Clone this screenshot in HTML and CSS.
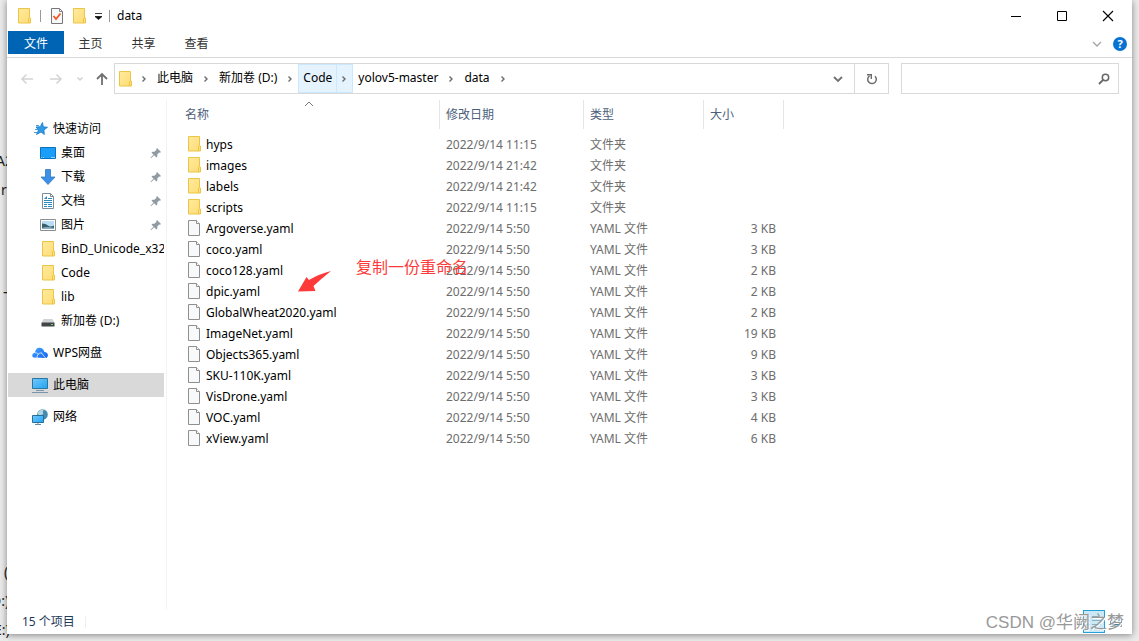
FILE: index.html
```html
<!DOCTYPE html>
<html lang="zh-CN">
<head>
<meta charset="utf-8">
<title>data</title>
<link rel="stylesheet" href="styles.css">
</head>
<body>
<svg class="sprite" aria-hidden="true">
  <defs>
    <linearGradient id="gold" x1="0" y1="0" x2="1" y2="1"><stop offset="0" stop-color="#ffea9e"/><stop offset="1" stop-color="#ffdc74"/></linearGradient>
    <linearGradient id="sky" x1="0" y1="0" x2="1" y2="1"><stop offset="0" stop-color="#72c8fb"/><stop offset="1" stop-color="#21a3f4"/></linearGradient>
    <linearGradient id="wps" x1="0" y1="0" x2="1" y2="1"><stop offset="0" stop-color="#46a5ff"/><stop offset="1" stop-color="#1263ee"/></linearGradient>
  </defs>
  <symbol id="folder" viewBox="0 0 16 16"><path d="M.5.5h11v9.500h1v5H.5z" fill="url(#gold)" stroke="#ebc546"/><path d="M10.500 15v-4.500l1-1" fill="none" stroke="#ebc546"/></symbol>
  <symbol id="file" viewBox="0 0 16 16"><path d="M.5.5h8l3 3v12H.5z" fill="#f8f9fa" stroke="#8f8f8f"/><path d="M8.500.5v3h3" fill="#fff" stroke="#8f8f8f"/></symbol>
  <symbol id="pin" viewBox="0 0 12 12"><path d="M7 1l4 4-1 .8-.8-.2-2 2 .2 2-1 .9-2.200-2.200L1 11.300l-.5-.5L3.500 7.700 1.500 5.600l1-.9 2 .1 2-2L6.300 1.900z" fill="#8f9aa3"/></symbol>
  <symbol id="right" viewBox="0 0 8 8"><path d="M2.500 1.500L5 4 2.500 6.500" fill="none" stroke="#6b6b6b" stroke-width="1.400"/></symbol>
</svg>

<div class="backdrop" aria-hidden="true">
  <span class="bit bit-a">A2</span><span class="bit bit-b">r</span><span class="bit bit-c">—</span>
  <span class="bit bit-d">(</span><span class="bit bit-e">D:)</span><span class="bit bit-f">E:)</span>
</div>

<div class="window">
  <header class="titlebar">
    <div class="quick">
      <svg class="icon"><use href="#folder"/></svg>
      <span class="bar"></span>
      <button class="plain" aria-label="属性"><svg class="icon" viewBox="0 0 16 16"><path d="M.5.5h8l3 3v12H.5z" fill="#f7f8f9" stroke="#777"/><path d="M8.500.5v3h3" fill="none" stroke="#888"/><path d="M2.500 8l2.500 3L9.500 5.500" fill="none" stroke="#f05a22" stroke-width="1.800"/></svg></button>
      <button class="plain" aria-label="新建文件夹"><svg class="icon"><use href="#folder"/></svg></button>
      <button class="plain" aria-label="自定义"><svg class="tiny" viewBox="0 0 8 8"><path d="M0 1.500h7M0 4.500h7L3.500 7.500z" fill="#111" stroke="#111" stroke-width=".8"/></svg></button>
      <span class="bar"></span>
    </div>
    <h1 class="title">data</h1>
    <div class="controls">
      <button class="control" aria-label="最小化"><svg viewBox="0 0 12 12"><path d="M1 6.500h10" stroke="#000"/></svg></button>
      <button class="control" aria-label="最大化"><svg viewBox="0 0 12 12"><path d="M1.500 1.500h9v9h-9z" fill="none" stroke="#000"/></svg></button>
      <button class="control" aria-label="关闭"><svg viewBox="0 0 12 12"><path d="M1 1l10 10M11 1L1 11" stroke="#000" stroke-width="1.100"/></svg></button>
    </div>
  </header>

  <nav class="ribbon">
    <button class="tab active">文件</button><button class="tab">主页</button><button class="tab">共享</button><button class="tab">查看</button>
    <div class="help">
      <button class="plain" aria-label="展开功能区"><svg class="small" viewBox="0 0 10 10"><path d="M1 3l4 4 4-4" fill="none" stroke="#a5a5a5" stroke-width="1.300"/></svg></button>
      <button class="question" aria-label="帮助">?</button>
    </div>
  </nav>

  <div class="navigation">
    <div class="arrows">
      <button class="plain" aria-label="后退"><svg class="arrow" viewBox="0 0 14 14"><path d="M13 7H2M6.500 2.500L2 7l4.500 4.500" fill="none" stroke="#d4d4d4" stroke-width="1.500"/></svg></button>
      <button class="plain" aria-label="前进"><svg class="arrow" viewBox="0 0 14 14"><path d="M1 7h11M7.500 2.500L12 7l-4.500 4.500" fill="none" stroke="#d4d4d4" stroke-width="1.500"/></svg></button>
      <button class="plain" aria-label="最近"><svg class="tiny" viewBox="0 0 8 8"><path d="M1.500 2.500L4 5l2.500-2.500" fill="none" stroke="#d0d0d0" stroke-width="1.500"/></svg></button>
      <button class="plain" aria-label="向上"><svg class="arrow" viewBox="0 0 14 14"><path d="M7 13V2M2 7l5-5 5 5" fill="none" stroke="#707070" stroke-width="1.800"/></svg></button>
    </div>
    <div class="address">
      <svg class="icon"><use href="#folder"/></svg>
      <svg class="tiny chevron"><use href="#right"/></svg>
      <button class="crumb">此电脑</button><svg class="tiny chevron"><use href="#right"/></svg>
      <button class="crumb">新加卷 (D:)</button><svg class="tiny chevron"><use href="#right"/></svg>
      <span class="hot"><button class="crumb">Code</button><button class="next" aria-label="Code 的子文件夹"><svg class="tiny"><use href="#right"/></svg></button></span>
      <button class="crumb">yolov5-master</button><svg class="tiny chevron"><use href="#right"/></svg>
      <button class="crumb">data</button><svg class="tiny chevron"><use href="#right"/></svg>
      <button class="history" aria-label="以前的位置"><svg class="small" viewBox="0 0 10 10"><path d="M1 3l4 4 4-4" fill="none" stroke="#707070" stroke-width="1.800"/></svg></button>
      <button class="refresh" aria-label="刷新"><svg class="reload" viewBox="0 0 12 12"><path d="M9 3.200a4.300 4.300 0 1 1-5.500-.4" fill="none" stroke="#6d6d6d" stroke-width="1.500"/><path d="M1 1.700h4.300V6" fill="none" stroke="#6d6d6d" stroke-width="1.400"/></svg></button>
    </div>
    <div class="search">
      <input class="query" type="search" aria-label="搜索">
      <svg class="lens" viewBox="0 0 12 12"><circle cx="7.500" cy="4.500" r="3.200" fill="none" stroke="#686868" stroke-width="1.500"/><path d="M5.300 6.700L1 11" stroke="#686868" stroke-width="1.900"/></svg>
    </div>
  </div>

  <div class="content">
    <aside class="sidebar">
      <a class="place top" href="#"><svg class="icon" viewBox="0 0 16 16"><path d="M10.500 1.500l.8 4.300 4.200.5-3.600 2.600.4 4.600-3.300-2.500-4.500 2.500 2-4.500L4 6l4.200-.3z" fill="#2f9ae8" stroke="#1678c8" stroke-width=".8"/><path d="M4 4.500h3M3 8.500h3M2 11.500h3" stroke="#4b9bd6"/></svg>快速访问</a>
      <a class="place" href="#"><svg class="icon" viewBox="0 0 16 16"><path d="M.5 2.500h15v11H.5z" fill="#1b9dfa" stroke="#0873be"/><path d="M1 12.500h1M3 12.500h1M11 12.500h4" stroke="#8fd1ff"/></svg><span class="name">桌面</span><svg class="pin"><use href="#pin"/></svg></a>
      <a class="place" href="#"><svg class="icon" viewBox="0 0 16 16"><path d="M5.500.5h5v7.500h4.500L8 15.500 1 8h4.500z" fill="#3c91e6" stroke="#2670bb" stroke-width=".7"/></svg><span class="name">下载</span><svg class="pin"><use href="#pin"/></svg></a>
      <a class="place" href="#"><svg class="icon" viewBox="0 0 16 16"><path d="M2.500.5h8l3 3v12h-11z" fill="#fff" stroke="#7d8c97"/><path d="M10.500.5v3h3" fill="none" stroke="#7d8c97"/><path d="M4 7.500h8M4 9.500h8M4 11.500h3M8 11.500h4M4 13.500h3M8 13.500h4M8 5.500h4" stroke="#2d88bb"/><path d="M4 6l3-3v3z" fill="#2580c8"/></svg><span class="name">文档</span><svg class="pin"><use href="#pin"/></svg></a>
      <a class="place" href="#"><svg class="icon" viewBox="0 0 16 16"><path d="M.5 2.500h15v11H.5z" fill="#fff" stroke="#8b8f94"/><path d="M2 4h12v8H2z" fill="#b9ddf5"/><path d="M2 6.500q4 0 6 2t6 0V11H2z" fill="#36606b"/><path d="M2 11q5-2 12 0v1H2z" fill="#87afbf"/></svg><span class="name">图片</span><svg class="pin"><use href="#pin"/></svg></a>
      <a class="place folder" href="#"><svg class="icon"><use href="#folder"/></svg><span class="name">BinD_Unicode_x32</span></a>
      <a class="place folder" href="#"><svg class="icon"><use href="#folder"/></svg><span class="name">Code</span></a>
      <a class="place folder" href="#"><svg class="icon"><use href="#folder"/></svg><span class="name">lib</span></a>
      <a class="place" href="#"><svg class="icon" viewBox="0 0 16 16"><path d="M3.500 6h9l2 4h-13z" fill="#d0d3d5"/><path d="M1.500 9.500h13v4h-13z" fill="#424548"/><path d="M11 11.500h2" stroke="#58e26b"/></svg><span class="name">新加卷 (D:)</span></a>
      <a class="place top spaced" href="#"><svg class="icon" viewBox="0 0 16 16"><path d="M1.500 12.500C-.5 11.500 0 8 3 7.800 3.500 3.500 6 2.500 8 2.700c2.500.3 4 2 4.300 4.300 4 0 4.700 4.500 2 6z" fill="url(#wps)"/><path d="M5 13.500c-.2-4 2-6 5-5.500M9.500 8l4.500 5.500M3 7.800c2 0 3 .7 3.700 1.700" fill="none" stroke="#fff" stroke-width=".7"/></svg>WPS网盘</a>
      <a class="place top spaced current" href="#"><svg class="icon" viewBox="0 0 16 16"><path d="M.5 1.500h15v10H.5z" fill="url(#sky)" stroke="#2b769f"/><path d="M4 13.500h8M0 15.500h16" stroke="#7795ab"/></svg>此电脑</a>
      <a class="place top spaced" href="#"><svg class="icon" viewBox="0 0 16 16"><circle cx="10.500" cy="5.500" r="5.300" fill="#438bb0"/><path d="M6 3q2-3 6-2.500-2 2-1 3.500t-2 2-3-1z" fill="#b4d8df"/><path d="M.5 6.500h11v7H.5z" fill="url(#sky)" stroke="#276f9b"/><path d="M3 15.500h6M6 14v2" stroke="#648ba6"/></svg>网络</a>
    </aside>

    <main class="files">
      <svg class="sort" viewBox="0 0 10 6" aria-hidden="true"><path d="M1 5l4-4 4 4" fill="none" stroke="#777"/></svg>
      <table class="list">
        <colgroup><col class="col-name"><col class="col-date"><col class="col-type"><col class="col-size"></colgroup>
        <thead><tr><th>名称</th><th>修改日期</th><th>类型</th><th>大小</th></tr></thead>
        <tbody>
          <tr><td><span class="entry"><svg class="icon"><use href="#folder"/></svg>hyps</span></td><td>2022/9/14 11:15</td><td>文件夹</td><td></td></tr>
          <tr><td><span class="entry"><svg class="icon"><use href="#folder"/></svg>images</span></td><td>2022/9/14 21:42</td><td>文件夹</td><td></td></tr>
          <tr><td><span class="entry"><svg class="icon"><use href="#folder"/></svg>labels</span></td><td>2022/9/14 21:42</td><td>文件夹</td><td></td></tr>
          <tr><td><span class="entry"><svg class="icon"><use href="#folder"/></svg>scripts</span></td><td>2022/9/14 11:15</td><td>文件夹</td><td></td></tr>
          <tr><td><span class="entry"><svg class="icon"><use href="#file"/></svg>Argoverse.yaml</span></td><td>2022/9/14 5:50</td><td>YAML 文件</td><td>3 KB</td></tr>
          <tr><td><span class="entry"><svg class="icon"><use href="#file"/></svg>coco.yaml</span></td><td>2022/9/14 5:50</td><td>YAML 文件</td><td>3 KB</td></tr>
          <tr><td><span class="entry"><svg class="icon"><use href="#file"/></svg>coco128.yaml</span></td><td>2022/9/14 5:50</td><td>YAML 文件</td><td>2 KB</td></tr>
          <tr><td><span class="entry"><svg class="icon"><use href="#file"/></svg>dpic.yaml</span></td><td>2022/9/14 5:50</td><td>YAML 文件</td><td>2 KB</td></tr>
          <tr><td><span class="entry"><svg class="icon"><use href="#file"/></svg>GlobalWheat2020.yaml</span></td><td>2022/9/14 5:50</td><td>YAML 文件</td><td>2 KB</td></tr>
          <tr><td><span class="entry"><svg class="icon"><use href="#file"/></svg>ImageNet.yaml</span></td><td>2022/9/14 5:50</td><td>YAML 文件</td><td>19 KB</td></tr>
          <tr><td><span class="entry"><svg class="icon"><use href="#file"/></svg>Objects365.yaml</span></td><td>2022/9/14 5:50</td><td>YAML 文件</td><td>9 KB</td></tr>
          <tr><td><span class="entry"><svg class="icon"><use href="#file"/></svg>SKU-110K.yaml</span></td><td>2022/9/14 5:50</td><td>YAML 文件</td><td>3 KB</td></tr>
          <tr><td><span class="entry"><svg class="icon"><use href="#file"/></svg>VisDrone.yaml</span></td><td>2022/9/14 5:50</td><td>YAML 文件</td><td>3 KB</td></tr>
          <tr><td><span class="entry"><svg class="icon"><use href="#file"/></svg>VOC.yaml</span></td><td>2022/9/14 5:50</td><td>YAML 文件</td><td>4 KB</td></tr>
          <tr><td><span class="entry"><svg class="icon"><use href="#file"/></svg>xView.yaml</span></td><td>2022/9/14 5:50</td><td>YAML 文件</td><td>6 KB</td></tr>
        </tbody>
      </table>
      <svg class="pointer" viewBox="0 0 34 22" aria-hidden="true"><path d="M0 20.500L8.500 6l2.500 3Q21 3 33 0 23 8 15.500 15l2 5z" fill="#fd3a39"/></svg>
      <p class="note">复制一份重命名</p>
    </main>
  </div>

  <footer class="status">
    <span class="count">15 个项目</span>
    <div class="views">
      <button class="view chosen" aria-label="详细信息"><svg viewBox="0 0 16 16"><path d="M1 2.500h3M6 2.500h9M1 6.500h3M6 6.500h9M1 10.500h3M6 10.500h9M1 14.500h3M6 14.500h9" stroke="#8fb2c2"/></svg></button>
      <button class="view" aria-label="大图标"><svg viewBox="0 0 16 16"><path d="M2.500 3.500h11v9h-11z" fill="#d9edf6" stroke="#8c9aa3"/><path d="M4 10l3-3 2 2 2-1 2 3H4z" fill="#3983a6"/></svg></button>
    </div>
  </footer>
</div>
<p class="watermark">CSDN @华阙之梦</p>
</body>
</html>
```
FILE: styles.css
```css
* { box-sizing: border-box; }
body {
  margin: 0;
  height: 100vh;
  overflow: hidden;
  position: relative;
  background: #ebebeb;
  color: #000;
  font: 12px/20px "Noto Sans", "Noto Sans CJK SC", sans-serif;
}
button, input { font: inherit; color: inherit; border: 0; background: none; padding: 0; margin: 0; }
svg { display: block; flex: none; }
.sprite { position: absolute; width: 0; height: 0; }
.icon { width: 16px; height: 16px; }
.small { width: 10px; height: 10px; }
.tiny { width: 8px; height: 8px; }
.plain { display: flex; }

.backdrop { position: absolute; inset: 0; font-size: 14px; color: #222; }
.bit { position: absolute; line-height: 20px; }
.bit-a { left: -4px; top: 151px; }
.bit-b { left: 1px; top: 180px; }
.bit-c { left: 3px; top: 282px; }
.bit-d { left: 4px; top: 562px; }
.bit-e { left: -9px; top: 591px; }
.bit-f { left: -6px; top: 620px; }

.window {
  position: relative;
  display: flex;
  flex-direction: column;
  height: calc(100vh - 7px);
  margin: 0 7px;
  background: #fff;
  box-shadow: 0 1px 7px rgba(0, 0, 0, .45);
}

.titlebar { display: flex; align-items: center; height: 31px; padding-left: 11px; }
.quick { display: flex; align-items: center; gap: 6px; }
.bar { width: 1px; height: 12px; background: #999; }
.quick .bar { margin-right: 4px; }
.title { margin: 0; padding-left: 3px; flex: 1; font-size: 12px; font-weight: 400; }
.controls { display: flex; padding-right: 1px; }
.control { width: 46px; height: 31px; display: flex; align-items: center; justify-content: center; }
.control svg { width: 12px; height: 12px; }

.ribbon { display: flex; height: 27px; padding-left: 1px; border-bottom: 1px solid #d9d9d9; color: #333; }
.tab { width: 53px; height: 23px; padding-top: 2px; line-height: 20px; }
.tab.active { width: 56px; background: #0064b4; color: #fff; }
.help { display: flex; align-items: center; gap: 11px; margin-left: auto; padding-right: 5px; }
.question { width: 14px; height: 14px; border-radius: 50%; background: #0873d1; color: #fff; font-size: 11px; line-height: 14px; font-weight: 700; }

.navigation { display: flex; height: 42px; padding: 5px 13px 6px 13px; }
.arrows { display: flex; align-items: center; gap: 15px; width: 94px; }
.arrows .tiny { margin: 0 -4px 0 -2px; }
.arrow { width: 14px; height: 14px; }
.address { flex: 1; min-width: 0; display: flex; align-items: center; padding-left: 4px; border: 1px solid #d9d9d9; white-space: nowrap; }
.crumb { padding: 0 4px; height: 29px; padding-bottom: 2px; }
.chevron { margin: 0 5px; }
.hot { display: flex; background: #e5f3ff; border: 1px solid #cce8ff; margin: 0 1px 0 -1px; }
.hot .crumb { height: 27px; }
.next { display: flex; align-items: center; padding: 0 4px 0 3px; border-left: 1px solid #cce8ff; }
.history { display: flex; align-items: center; justify-content: center; width: 32px; margin-left: auto; }
.refresh { display: flex; align-items: center; justify-content: center; width: 34px; height: 29px; border-left: 1px solid #d9d9d9; }
.reload { width: 12px; height: 12px; }
.search { width: 218px; margin-left: 12px; display: flex; align-items: center; padding-right: 8px; border: 1px solid #d9d9d9; }
.query { flex: 1; min-width: 0; height: 29px; padding: 0 6px; outline: 0; }
.lens { width: 12px; height: 12px; }

.content { flex: 1; min-height: 0; display: flex; }
.sidebar { width: 160px; padding: 17px 2px 0 1px; border-right: 1px solid #f3f3f3; }
.place { display: flex; align-items: center; gap: 5px; height: 24px; padding-left: 32px; color: inherit; text-decoration: none; white-space: nowrap; }
.place.folder { padding-left: 34px; gap: 3px; }
.place.top { padding-left: 24px; }
.place.spaced { margin-top: 8px; }
.place.current { background: #d9d9d9; }
.name { flex: 1; min-width: 0; overflow: hidden; }
.pin { width: 12px; height: 12px; margin-right: 2px; }

.files { position: relative; flex: 1; min-width: 0; }
.sort { position: absolute; left: 137px; top: 1px; width: 10px; height: 6px; }
.list { width: 617px; table-layout: fixed; border-collapse: separate; border-spacing: 0; color: #6d6d6d; }
.col-name { width: 273px; }
.col-date { width: 144px; }
.col-type { width: 120px; }
.col-size { width: 80px; }
th { height: 29px; padding: 0 0 0 6px; border-right: 1px solid #e5e5e5; text-align: left; font-weight: 400; color: #4c607a; }
th:first-child { padding-left: 18px; }
thead::after { content: ""; display: block; height: 5px; }
td { height: 21px; padding: 0 0 0 6px; white-space: nowrap; }
td:first-child { padding-left: 21px; color: #000; }
td:last-child { padding-right: 8px; text-align: right; }
.entry { display: flex; align-items: center; gap: 2px; }
.entry .icon { margin-bottom: 2px; }
.pointer { position: absolute; left: 131px; top: 171px; width: 34px; height: 22px; }
.note { position: absolute; left: 189px; top: 155px; margin: 0; font-size: 16px; line-height: 24px; color: #fd3a39; white-space: nowrap; }

.status { display: flex; align-items: center; height: 25px; padding: 0 5px 0 15px; color: #1e395b; }
.count { padding-right: 10px; border-right: 1px solid #eee; line-height: 12px; }
.views { display: flex; margin-left: auto; }
.view { display: flex; align-items: center; justify-content: center; width: 22px; height: 23px; }
.view svg { width: 16px; height: 16px; }
.view.chosen { border: 1px solid #26a0da; background: #cbe8f6; }
.watermark { position: absolute; right: 15px; bottom: 6px; margin: 0; font: 17px/24px "Liberation Sans", "Noto Sans CJK SC", sans-serif; color: #999; text-shadow: 1px 1px 0 #fff; white-space: nowrap; }
```
